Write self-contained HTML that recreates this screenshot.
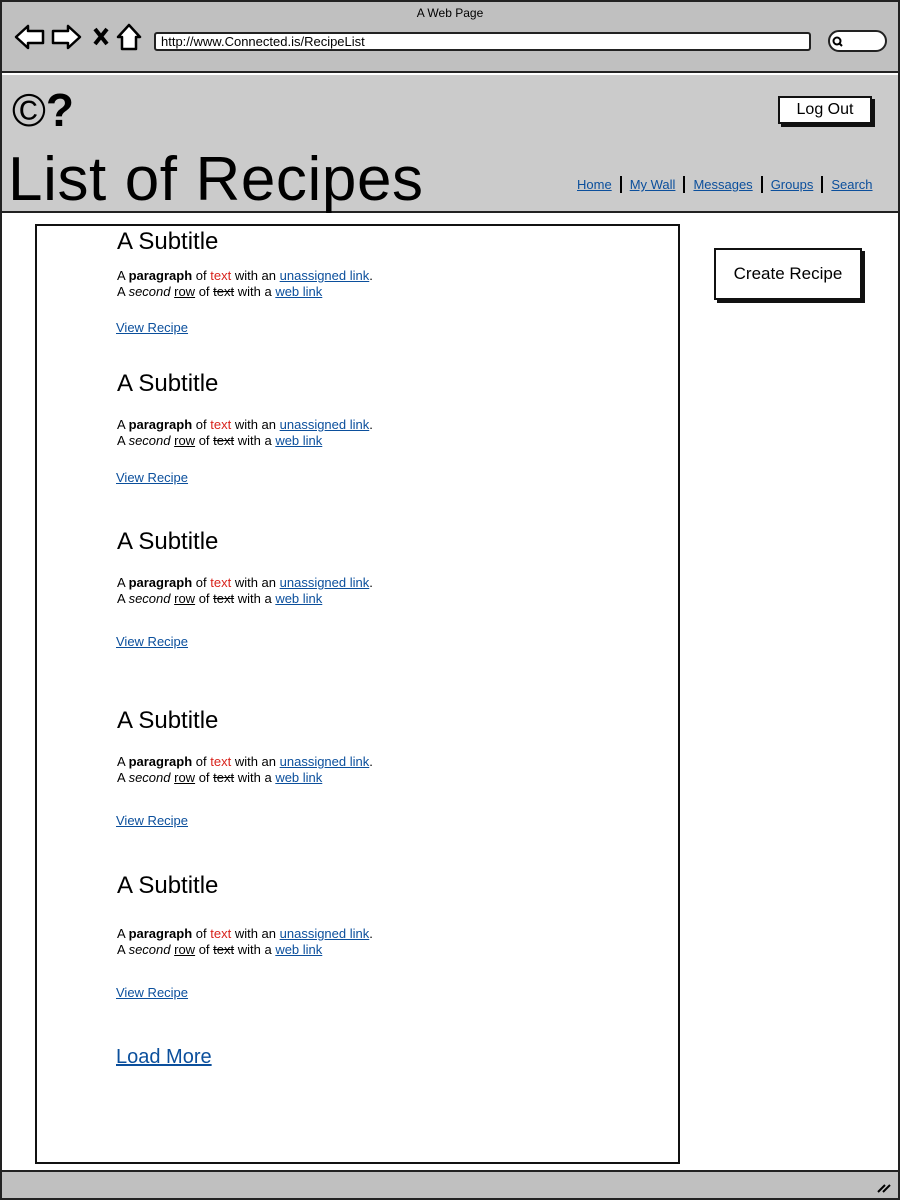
<!DOCTYPE html>
<html><head><meta charset="utf-8"><style>
*{margin:0;padding:0;box-sizing:border-box}
body{width:900px;height:1200px;position:relative;background:#fff;font-family:"Liberation Sans",sans-serif;overflow:hidden;color:#000}
.a{position:absolute}
a{color:#0b4f9c;text-decoration:underline}
.p{font-size:13px;line-height:16px;white-space:nowrap}
.red{color:#d8231c}
.st{font-size:24px;white-space:nowrap}
.vr{font-size:13px}
</style></head><body>
<div class="a" style="left:0;top:0;width:900px;height:1200px;border:2px solid #222"></div>
<div class="a" style="left:2px;top:2px;width:896px;height:71px;background:#c0c0c0;border-bottom:2px solid #222"></div>
<div class="a" style="left:0;top:6px;width:900px;text-align:center;font-size:12px">A Web Page</div>
<svg class="a" style="left:14px;top:21px" width="130" height="32" viewBox="0 0 130 32">
<path d="M2 16 L14 5 L14 10 L29 10 L29 22 L14 22 L14 27 Z" fill="#fff" stroke="#000" stroke-width="2.5" stroke-linejoin="round"/>
<path d="M66 16 L54 5 L54 10 L39 10 L39 22 L54 22 L54 27 Z" fill="#fff" stroke="#000" stroke-width="2.5" stroke-linejoin="round"/>
<path d="M81 8 L93 23 M93 8 L81 23" stroke="#000" stroke-width="4"/>
<path d="M104 16 L115 4 L126 16 L122 16 L122 28 L108 28 L108 16 Z" fill="#fff" stroke="#000" stroke-width="2.5" stroke-linejoin="round"/>
</svg>
<div class="a" style="left:154px;top:32px;width:657px;height:19px;background:#fff;border:2px solid #222;border-radius:3px;font-size:13px;padding-left:5px;line-height:15px">http://www.Connected.is/RecipeList</div>
<div class="a" style="left:828px;top:30px;width:59px;height:22px;background:#fff;border:2px solid #222;border-radius:11px"></div>
<svg class="a" style="left:832px;top:36px" width="12" height="12"><circle cx="5" cy="5" r="3.5" fill="none" stroke="#000" stroke-width="2"/><path d="M7 7 L10 10" stroke="#000" stroke-width="2"/></svg>
<div class="a" style="left:2px;top:75px;width:896px;height:138px;background:#cbcbcb;border-bottom:2px solid #222"></div>
<div class="a" style="left:12px;top:82px;font-size:46px;line-height:56px;font-weight:normal">©<b>?</b></div>
<div class="a" style="left:8px;top:144px;font-size:62px;line-height:72px;letter-spacing:0.6px">List of Recipes</div>
<div class="a" style="left:778px;top:96px;width:94px;height:28px;background:#fff;border:2px solid #111;box-shadow:3px 3px 0 #111;font-size:16px;text-align:center;line-height:24px">Log Out</div>
<div class="a" style="left:577px;top:176px;font-size:13px;white-space:nowrap">
<a>Home</a><span style="display:inline-block;width:2px;height:17px;background:#000;margin:0 8px -4px"></span><a>My Wall</a><span style="display:inline-block;width:2px;height:17px;background:#000;margin:0 8px -4px"></span><a>Messages</a><span style="display:inline-block;width:2px;height:17px;background:#000;margin:0 8px -4px"></span><a>Groups</a><span style="display:inline-block;width:2px;height:17px;background:#000;margin:0 8px -4px"></span><a>Search</a></div>
<div class="a" style="left:35px;top:224px;width:645px;height:940px;border:2px solid #111"></div>
<div class="a" style="left:714px;top:248px;width:148px;height:52px;background:#fff;border:2px solid #111;box-shadow:3px 3px 0 #111;font-size:17px;text-align:center;line-height:48px">Create Recipe</div>

<div class="a st" style="left:117px;top:228px">A Subtitle</div>
<div class="a p" style="left:117px;top:268px">A <b>paragraph</b> of <span class="red">text</span> with an <a>unassigned link</a>.<br>A <i>second</i> <u>row</u> of <s>text</s> with a <a>web link</a></div>
<div class="a vr" style="left:116px;top:320px"><a>View Recipe</a></div>

<div class="a st" style="left:117px;top:370px">A Subtitle</div>
<div class="a p" style="left:117px;top:417px">A <b>paragraph</b> of <span class="red">text</span> with an <a>unassigned link</a>.<br>A <i>second</i> <u>row</u> of <s>text</s> with a <a>web link</a></div>
<div class="a vr" style="left:116px;top:470px"><a>View Recipe</a></div>

<div class="a st" style="left:117px;top:528px">A Subtitle</div>
<div class="a p" style="left:117px;top:575px">A <b>paragraph</b> of <span class="red">text</span> with an <a>unassigned link</a>.<br>A <i>second</i> <u>row</u> of <s>text</s> with a <a>web link</a></div>
<div class="a vr" style="left:116px;top:634px"><a>View Recipe</a></div>

<div class="a st" style="left:117px;top:707px">A Subtitle</div>
<div class="a p" style="left:117px;top:754px">A <b>paragraph</b> of <span class="red">text</span> with an <a>unassigned link</a>.<br>A <i>second</i> <u>row</u> of <s>text</s> with a <a>web link</a></div>
<div class="a vr" style="left:116px;top:813px"><a>View Recipe</a></div>

<div class="a st" style="left:117px;top:872px">A Subtitle</div>
<div class="a p" style="left:117px;top:926px">A <b>paragraph</b> of <span class="red">text</span> with an <a>unassigned link</a>.<br>A <i>second</i> <u>row</u> of <s>text</s> with a <a>web link</a></div>
<div class="a vr" style="left:116px;top:985px"><a>View Recipe</a></div>

<div class="a" style="left:116px;top:1046px;font-size:20px"><a>Load More</a></div>

<div class="a" style="left:2px;top:1170px;width:896px;height:28px;background:#c0c0c0;border-top:2px solid #222"></div>
<svg class="a" style="left:876px;top:1178px" width="16" height="16"><path d="M2 14 L9 7 M7 14 L14 7" stroke="#000" stroke-width="2"/></svg>
</body></html>
